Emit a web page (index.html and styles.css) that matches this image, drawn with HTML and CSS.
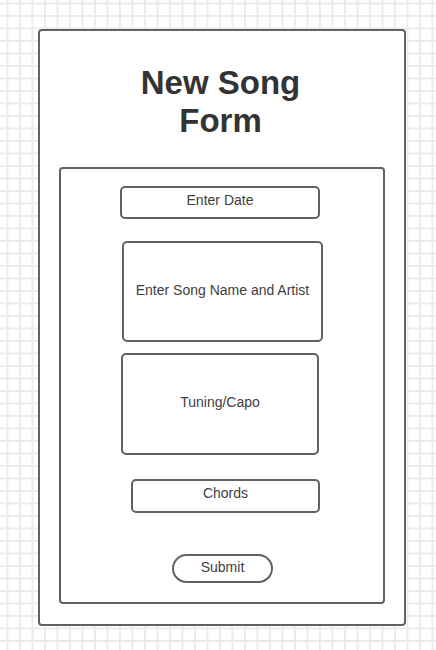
FILE: index.html
```html
<!DOCTYPE html>
<html lang="en">
<head>
  <meta charset="UTF-8">
  <meta name="viewport" content="width=device-width, initial-scale=1.0">
  <title>New Song Form</title>
  <link rel="stylesheet" href="styles.css">
</head>
<body>
  <div class="sheet">
    <h1>New Song<br>Form</h1>

    <div class="form">
      <div class="field date">Enter Date</div>
      <div class="field song">Enter Song Name and Artist</div>
      <div class="field tuning">Tuning/Capo</div>
      <div class="field chords">Chords</div>
      <div class="submit">Submit</div>
    </div>
  </div>
</body>
</html>
```

FILE: styles.css
```css
body {
  margin: 0;
  width: 436px;
  height: 650px;
  padding: 29px 0 0 38px;
  box-sizing: border-box;
  font-family: 'Liberation Sans', Arial, sans-serif;
  color: #333;
  background-color: #fff;
  background-image:
    linear-gradient(to right, #ebebeb 1.5px, transparent 1.5px),
    linear-gradient(to bottom, #ebebeb 1.5px, transparent 1.5px);
  background-size: 12.5px 12.5px;
  background-position: 6.5px 2.5px;
}
.sheet {
  width: 368px;
  height: 597px;
  box-sizing: border-box;
  border: 2px solid #626262;
  border-radius: 4px;
  background: #fff;
  padding: 0 19px 20px;
  display: flex;
  flex-direction: column;
}
h1 {
  margin: 33px 0 27px;
  padding-right: 3px;
  font-size: 33px;
  line-height: 38px;
  font-weight: bold;
  text-align: center;
  color: #333;
}
.form {
  flex: 1;
  border: 2px solid #626262;
  border-radius: 4px;
  padding-top: 17px;
  display: flex;
  flex-direction: column;
  align-items: flex-start;
}
.field {
  box-sizing: border-box;
  border: 2px solid #626262;
  border-radius: 5px;
  display: flex;
  align-items: center;
  justify-content: center;
  font-size: 14px;
  color: #404040;
}
.date {
  margin-left: 59px;
  width: 200px;
  height: 33px;
  padding-bottom: 5px;
}
.song {
  margin: 22px 0 0 61px;
  width: 201px;
  height: 101px;
  padding-bottom: 4px;
}
.tuning {
  margin: 11px 0 0 60px;
  width: 198px;
  height: 102px;
  padding-bottom: 4px;
}
.chords {
  margin: 24px 0 0 70px;
  width: 189px;
  height: 34px;
  padding-bottom: 6px;
}
.submit {
  margin: 41px 0 0 111px;
  width: 101px;
  height: 29px;
  box-sizing: border-box;
  border: 2px solid #626262;
  border-radius: 15px;
  display: flex;
  align-items: center;
  justify-content: center;
  padding-bottom: 3px;
  font-size: 14px;
  color: #404040;
}
```
